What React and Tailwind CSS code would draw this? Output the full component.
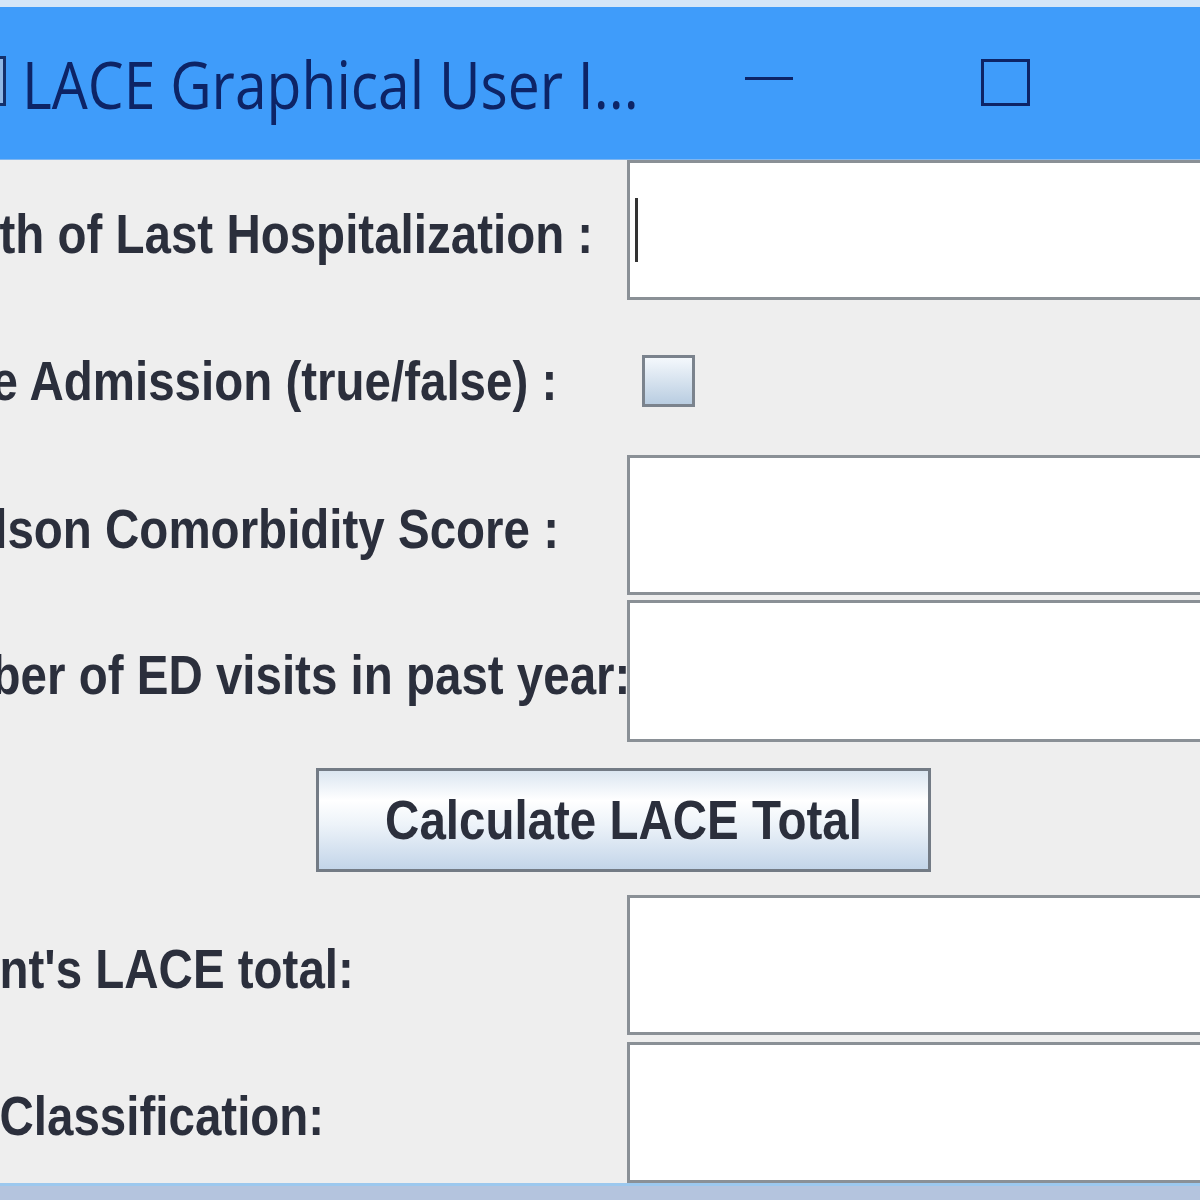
import React from 'react';

const labelFont = { fontFamily: '"Liberation Sans", Arial, sans-serif' };

const Label = ({ children }) => (
  <div className="w-[741px] -ml-[114px] shrink-0 flex items-center pt-[7px] whitespace-nowrap">
    <span
      className="inline-block scale-y-[1.18] text-[47.5px] font-bold text-[#2b2f3c] leading-none"
      style={labelFont}
    >
      {children}
    </span>
  </div>
);

const Field = ({ caret }) => (
  <div className="w-[640px] shrink-0 h-full bg-white border-[3px] border-r-0 border-[#8a9096] flex items-center">
    {caret && <div className="ml-[5px] w-[3px] h-[64px] bg-[#333]" />}
  </div>
);

const App = () => {
  return (
    <div className="w-[1200px] h-[1200px] overflow-hidden bg-[#eeeeee] flex flex-col">
      <div className="h-[7px] bg-[#d4e6f8] shrink-0" />
      <div className="h-[153px] shrink-0 bg-[#3f9cfa] flex items-center relative border-b border-[#7fb6f0]">
        <div className="w-[6px] h-[50px] -mt-[4px] border-[3px] border-l-0 border-[#13306b] bg-[#8fb8e6]" />
        <span
          className="ml-[16px] mt-[2px] inline-block scale-y-[1.15] text-[57px] text-[#0d2466] leading-none whitespace-nowrap"
          style={{ fontFamily: '"Open Sans", "Noto Sans", sans-serif' }}
        >
          LACE Graphical User I...
        </span>
        <div className="absolute left-[745px] top-[70px] w-[48px] h-[3px] bg-[#0d2466]" />
        <div className="absolute left-[981px] top-[52px] w-[49px] h-[47px] border-[3px] border-[#0d2466]" />
      </div>

      <div className="h-[140px] shrink-0 flex">
        <Label>Length of Last Hospitalization :</Label>
        <Field caret />
      </div>

      <div className="h-[155px] shrink-0 flex">
        <Label>Acute Admission (true/false) :</Label>
        <div className="flex items-center pl-[15px] pt-[6px]">
          <div className="w-[53px] h-[52px] border-[3px] border-[#7b838d] bg-[linear-gradient(to_bottom,#f4f8fc,#b9cde1)]" />
        </div>
      </div>

      <div className="h-[145px] shrink-0 flex pb-[5px]">
        <Label>Charlson Comorbidity Score :</Label>
        <Field />
      </div>

      <div className="h-[142px] shrink-0 flex">
        <Label>Number of ED visits in past year:</Label>
        <Field />
      </div>

      <div className="h-[153px] shrink-0 flex items-start pt-[26px] pl-[316px]">
        <button
          className="w-[615px] h-[104px] border-[3px] border-[#737b85] bg-[linear-gradient(to_bottom,#dbe6f1_0%,#ffffff_30%,#edf3f9_55%,#c3d5e9_100%)] flex items-center justify-center"
        >
          <span
            className="inline-block scale-y-[1.18] text-[47.5px] font-bold text-[#2b2f3c] leading-none"
            style={labelFont}
          >
            Calculate LACE Total
          </span>
        </button>
      </div>

      <div className="h-[147px] shrink-0 flex pb-[7px]">
        <Label>Patient's LACE total:</Label>
        <Field />
      </div>

      <div className="h-[141px] shrink-0 flex">
        <Label>Risk Classification:</Label>
        <Field />
      </div>

      <div className="flex-1 border-t-[3px] border-[#9cc8ee] bg-[#b4c4de]" />
    </div>
  );
};

export default App;
